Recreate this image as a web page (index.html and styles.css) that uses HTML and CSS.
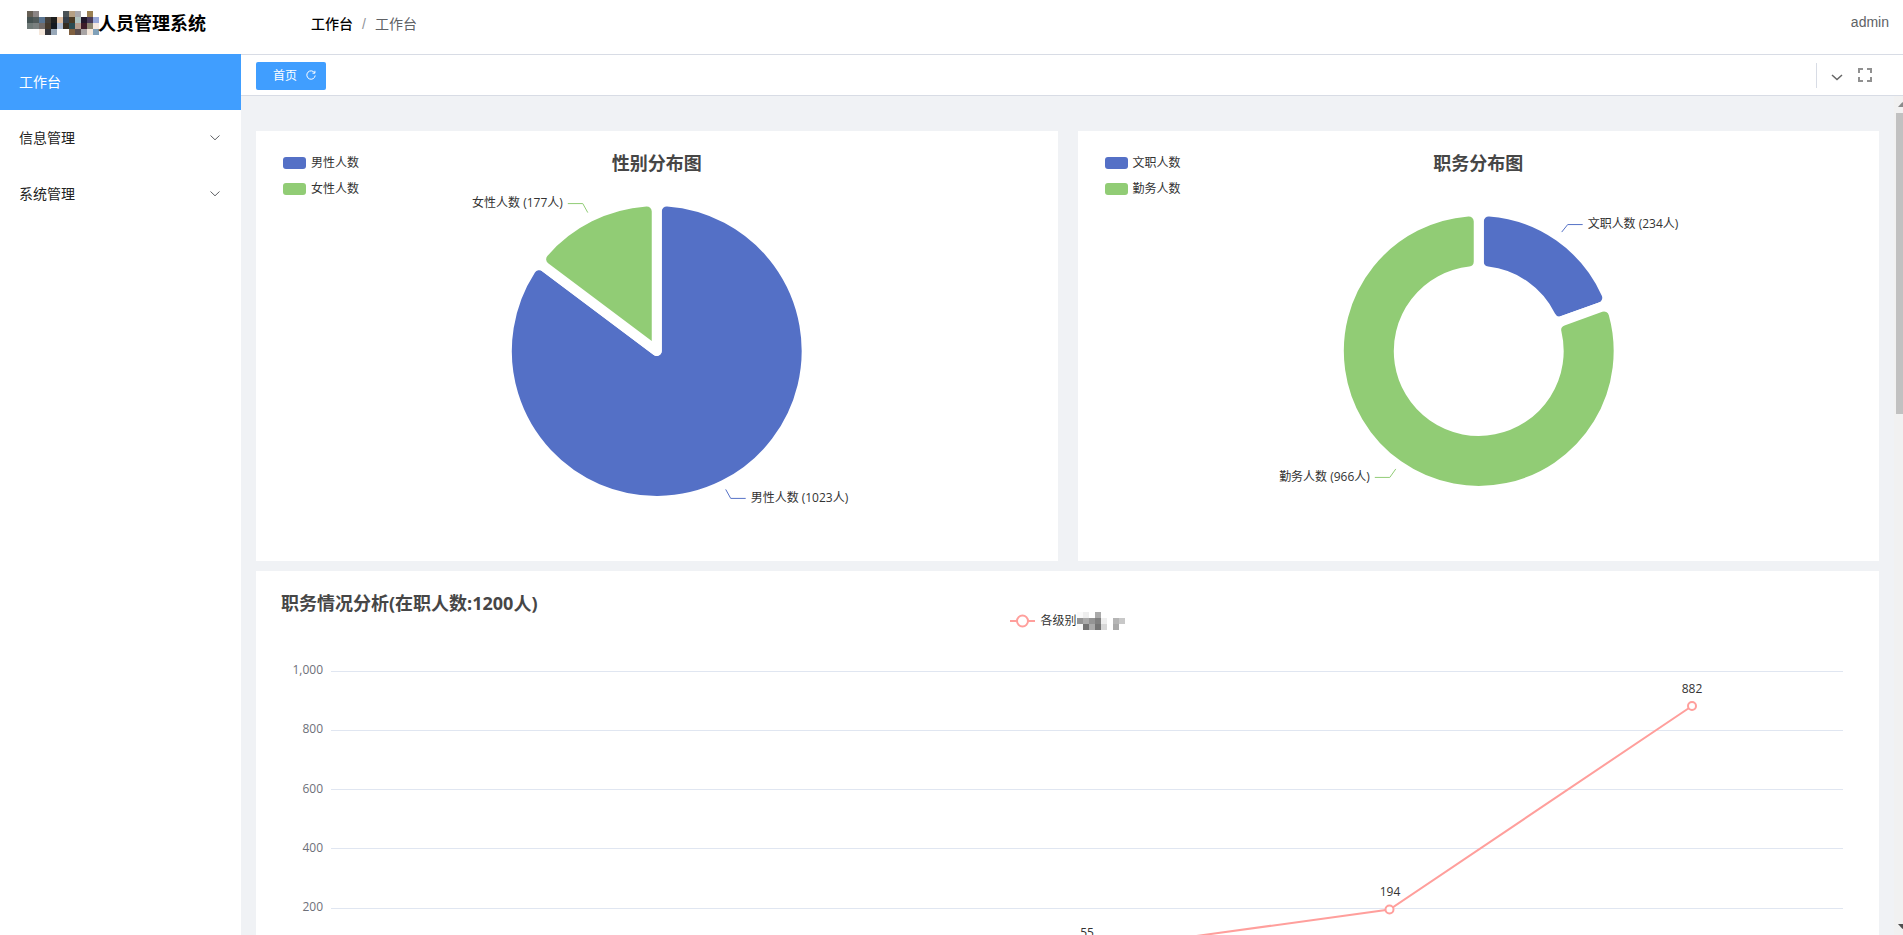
FILE: index.html
```html
<!DOCTYPE html>
<html lang="zh-CN">
<head>
<meta charset="utf-8">
<title>人员管理系统</title>
<link rel="stylesheet" href="styles.css">
</head>
<body>
<div class="app">
  <header class="header">
    <div class="brand">
      <svg class="brand-mosaic" width="72" height="24" viewBox="0 0 12 4" shape-rendering="crispEdges" aria-hidden="true">
        <path fill="#665f55" d="M0 0h1v1h-1z"/><path fill="#8b8585" d="M1 0h1v1h-1z"/><path fill="#4a5255" d="M6 0h1v1h-1z"/><path fill="#b5a084" d="M7 0h1v1h-1z"/><path fill="#a8a8ac" d="M8 0h1v1h-1z"/><path fill="#9a8052" d="M10 0h1v1h-1z"/>
        <path fill="#455252" d="M0 1h1v1h-1z"/><path fill="#505a5a" d="M1 1h1v1h-1z"/><path fill="#5a7490" d="M2 1h1v1h-1z"/><path fill="#433f3a" d="M3 1h1v1h-1z"/><path fill="#1e1e1e" d="M4 1h1v1h-1z"/><path fill="#dfc0a5" d="M5 1h1v1h-1z"/><path fill="#353f4a" d="M6 1h1v1h-1z"/><path fill="#4a3a25" d="M7 1h1v1h-1z"/><path fill="#b0c4c0" d="M8 1h1v1h-1z"/><path fill="#20182a" d="M9 1h1v1h-1z"/><path fill="#483a58" d="M10 1h1v1h-1z"/><path fill="#98a8d8" d="M11 1h1v1h-1z"/>
        <path fill="#6f7a78" d="M0 2h1v1h-1z"/><path fill="#7a8080" d="M1 2h1v1h-1z"/><path fill="#706a68" d="M2 2h1v1h-1z"/><path fill="#43382c" d="M3 2h1v1h-1z"/><path fill="#141820" d="M4 2h1v1h-1z"/><path fill="#b0bcd0" d="M5 2h1v1h-1z"/><path fill="#352c20" d="M6 2h1v1h-1z"/><path fill="#2c4c52" d="M7 2h1v1h-1z"/><path fill="#b8a090" d="M8 2h1v1h-1z"/><path fill="#3c1c28" d="M9 2h1v1h-1z"/><path fill="#8b8570" d="M10 2h1v1h-1z"/><path fill="#f5e8e0" d="M11 2h1v1h-1z"/>
        <path fill="#f5e8dc" d="M2 3h1v1h-1z"/><path fill="#34343a" d="M3 3h1v1h-1z"/><path fill="#98a8b8" d="M4 3h1v1h-1z"/><path fill="#806040" d="M7 3h1v1h-1z"/><path fill="#5a4e4e" d="M8 3h1v1h-1z"/><path fill="#a8a4a4" d="M9 3h1v1h-1z"/><path fill="#f5e8dc" d="M10 3h1v1h-1z"/><path fill="#80a0b8" d="M11 3h1v1h-1z"/>
      </svg>
      <h1 class="brand-name">人员管理系统</h1>
    </div>
    <nav class="breadcrumb" aria-label="面包屑">
      <a class="crumb crumb-root" href="#">工作台</a>
      <span class="crumb-sep">/</span>
      <span class="crumb">工作台</span>
    </nav>
    <a class="user" href="#">admin</a>
  </header>

  <div class="body">
    <nav class="sidebar" aria-label="主菜单">
      <a class="menu-item menu-item-active" href="#">工作台</a>
      <button class="menu-item" type="button"><span>信息管理</span>
        <svg width="12" height="12" viewBox="0 0 12 12" aria-hidden="true"><path class="stroke-icon" d="M1.500 4.500L6 8.800L10.500 4.500"/></svg>
      </button>
      <button class="menu-item" type="button"><span>系统管理</span>
        <svg width="12" height="12" viewBox="0 0 12 12" aria-hidden="true"><path class="stroke-icon" d="M1.500 4.500L6 8.800L10.500 4.500"/></svg>
      </button>
    </nav>

    <div class="content">
      <div class="tabs">
        <button class="tab" type="button">首页
          <svg width="12" height="12" viewBox="0 0 12 12" aria-hidden="true"><path class="tab-icon" d="M9.700 4A4.200 4.200 0 1 0 10.200 6.500M9.900 1.800V4.200H7.500"/></svg>
        </button>
        <div class="tab-tools">
          <button class="tool" type="button" aria-label="更多">
            <svg width="12" height="14" viewBox="0 0 12 14"><path class="tool-chevron" d="M1 7L6 11.500L11 7"/></svg>
          </button>
          <button class="tool" type="button" aria-label="全屏">
            <svg width="14" height="14" viewBox="0 0 14 14"><path class="tool-full" d="M1 5V1H5M9 1H13V5M13 9V13H9M5 13H1V9"/></svg>
          </button>
        </div>
      </div>

      <div class="viewport">
        <main class="main">
          <div class="row">
            <section class="card">
              <ul class="legend">
                <li><i class="swatch swatch-blue"></i>男性人数</li>
                <li><i class="swatch swatch-green"></i>女性人数</li>
              </ul>
              <h2 class="card-title card-title-center">性别分布图</h2>
              <svg class="plot" viewBox="0 0 802 430" role="img" aria-label="性别分布图">
                <g transform="translate(401 220)" class="slices">
                  <path class="blue" d="M0 0L0 -139.640A10 10 0 0 1 10.710 -149.620A150 150 0 1 1 -126.080 -81.270A10 10 0 0 1 -111.670 -83.840Z"/>
                  <path class="green" d="M0 0L-111.670 -83.840A10 10 0 0 1 -113.220 -98.400A150 150 0 0 1 -10.710 -149.620A10 10 0 0 1 0 -139.640Z"/>
                </g>
                <path class="lead lead-green" d="M332 81.500L327 72.500H312"/>
                <text class="label label-end" x="307" y="76">女性人数 (177人)</text>
                <path class="lead lead-blue" d="M470 358.500L475 367.500H490"/>
                <text class="label" x="495" y="371">男性人数 (1023人)</text>
              </svg>
            </section>
            <section class="card">
              <ul class="legend">
                <li><i class="swatch swatch-blue"></i>文职人数</li>
                <li><i class="swatch swatch-green"></i>勤务人数</li>
              </ul>
              <h2 class="card-title card-title-center">职务分布图</h2>
              <svg class="plot" viewBox="0 0 802 430" role="img" aria-label="职务分布图">
                <g transform="translate(401 220)" class="slices">
                  <path class="blue" d="M0 -89.440L0 -129.610A10 10 0 0 1 10.770 -139.590A140 140 0 0 1 127.690 -57.410A10 10 0 0 1 121.950 -43.900L84.150 -30.300A10 10 0 0 1 71.790 -35.290A80 80 0 0 0 8.890 -79.500A10 10 0 0 1 0 -89.440Z"/>
                  <path class="green" d="M84.150 -30.300L121.950 -43.900A10 10 0 0 1 134.980 -37.150A140 140 0 1 1 -10.770 -139.590A10 10 0 0 1 0 -129.610L0 -89.440A10 10 0 0 1 -8.890 -79.500A80 80 0 1 0 77.810 -18.570A10 10 0 0 1 84.150 -30.300Z"/>
                </g>
                <path class="lead lead-blue" d="M484 101L490 93.500H505"/>
                <text class="label" x="510" y="97">文职人数 (234人)</text>
                <path class="lead lead-green" d="M318 338L312 346.500H297"/>
                <text class="label label-end" x="292" y="350">勤务人数 (966人)</text>
              </svg>
            </section>
          </div>

          <section class="card">
            <h2 class="card-title">职务情况分析(在职人数:1200人)</h2>
            <div class="line-legend">
              <svg width="25" height="14" viewBox="0 0 25 14" aria-hidden="true"><path class="series" d="M0 7H25"/><circle class="dot" cx="12.500" cy="7" r="5.500"/></svg>
              <span>各级别</span>
              <svg class="legend-mosaic" width="48" height="18" viewBox="0 0 8 3" shape-rendering="crispEdges" aria-hidden="true">
                <path fill="#fafafa" d="M0 0h1v1h-1zM0 2h1v1h-1z"/><path fill="#eee" d="M1 0h1v1h-1zM4 1h1v1h-1z"/><path fill="#aaa" d="M3 0h1v1h-1zM1 1h1v1h-1zM2 2h1v1h-1zM6 2h1v1h-1z"/><path fill="#949494" d="M0 1h1v1h-1zM2 1h1v1h-1z"/><path fill="#808080" d="M3 1h1v1h-1z"/><path fill="#b5b5b5" d="M6 1h1v1h-1z"/><path fill="#c8c8c8" d="M7 1h1v1h-1z"/><path fill="#747474" d="M1 2h1v1h-1zM3 2h1v1h-1z"/><path fill="#d8d8d8" d="M4 2h1v1h-1z"/>
              </svg>
            </div>
            <svg class="plot" viewBox="0 0 1623 430" role="img" aria-label="职务情况分析">
              <path class="grid" d="M75 100.500H1587M75 159.500H1587M75 218.500H1587M75 277.500H1587M75 337.500H1587M75 396.500H1587"/>
              <g class="axis">
                <text x="67" y="103">1,000</text>
                <text x="67" y="162">800</text>
                <text x="67" y="222">600</text>
                <text x="67" y="281">400</text>
                <text x="67" y="340">200</text>
              </g>
              <path class="series" d="M831 380L1133.500 338.500L1436 135"/>
              <circle class="dot" cx="831" cy="380" r="4"/>
              <circle class="dot" cx="1133.500" cy="338.500" r="4"/>
              <circle class="dot" cx="1436" cy="135" r="4"/>
              <g class="values">
                <text x="831" y="366">55</text>
                <text x="1134" y="325">194</text>
                <text x="1436" y="122">882</text>
              </g>
            </svg>
          </section>
        </main>
        <div class="scrollbar" aria-hidden="true">
          <svg width="17" height="17" viewBox="0 0 17 17"><path fill="#8b8b8b" d="M4 11L8.500 6L13 11Z"/></svg>
          <div class="thumb"></div>
          <svg width="17" height="17" viewBox="0 0 17 17"><path fill="#505050" d="M4 6L8.500 11L13 6Z"/></svg>
        </div>
      </div>
    </div>
  </div>
</div>
</body>
</html>
```

FILE: styles.css
```css
* {
  box-sizing: border-box;
}

body {
  margin: 0;
  font-family: "Liberation Sans", "Noto Sans CJK SC", sans-serif;
  font-size: 14px;
  color: #303133;
  background: #fff;
}

button {
  margin: 0;
  border: 0;
  background: none;
  font: inherit;
  color: inherit;
  cursor: pointer;
}

a {
  color: inherit;
  text-decoration: none;
}

svg {
  display: block;
  flex: none;
}

.app {
  display: flex;
  flex-direction: column;
  height: 100vh;
  overflow: hidden;
}

/* Header */
.header {
  display: flex;
  align-items: center;
  flex: none;
  height: 54px;
  padding: 0 14px 8px 27px;
}

.brand {
  display: flex;
  align-items: center;
  width: 284px;
}

.brand-name {
  margin: 2px 0 0 -1px;
  font-size: 18px;
  line-height: 24px;
  color: #000;
}

.breadcrumb {
  display: flex;
  flex: 1;
  gap: 9px;
  padding-top: 2px;
  line-height: 20px;
}

.crumb {
  color: #606266;
}

.crumb-root {
  color: #000;
  font-weight: 500;
}

.crumb-sep {
  color: #909399;
}

.user {
  padding-bottom: 2px;
  color: #606266;
}

/* Sidebar */
.body {
  display: flex;
  flex: 1;
  min-height: 0;
}

.sidebar {
  flex: none;
  width: 241px;
}

.menu-item {
  display: flex;
  align-items: center;
  justify-content: space-between;
  width: 100%;
  height: 56px;
  padding: 0 20px 2px 19px;
  color: #222;
}

.menu-item-active {
  background: #409eff;
  color: #fff;
}

.stroke-icon {
  fill: none;
  stroke: #606266;
}

/* Tab bar */
.content {
  display: flex;
  flex: 1;
  flex-direction: column;
  min-width: 0;
}

.tabs {
  display: flex;
  align-items: center;
  justify-content: space-between;
  flex: none;
  height: 42px;
  padding: 1px 31px 0 15px;
  border-top: 1px solid #d8dce5;
  border-bottom: 1px solid #d8dce5;
}

.tab {
  display: flex;
  align-items: center;
  gap: 8px;
  height: 28px;
  padding: 0 9px 2px 17px;
  border-radius: 2px;
  background: #409eff;
  color: #fff;
  font-size: 12px;
}

.tab-icon {
  fill: none;
  stroke: #fff;
}

.tab-tools {
  display: flex;
  align-items: center;
  gap: 15px;
  height: 25px;
  padding-left: 14px;
  border-left: 1px solid #d8dce5;
}

.tool {
  padding: 0 0 2px;
}

.tool-chevron {
  fill: none;
  stroke: #666;
  stroke-width: 1.5;
}

.tool-full {
  fill: none;
  stroke: #909090;
  stroke-width: 2;
}

/* Scrolling area */
.viewport {
  display: flex;
  flex: 1;
  min-height: 0;
  overflow: hidden;
  background: #f0f2f5;
}

.main {
  display: flex;
  flex: 1;
  flex-direction: column;
  gap: 10px;
  min-width: 0;
  padding: 35px 15px 0;
}

.scrollbar {
  display: flex;
  flex: none;
  flex-direction: column;
  width: 17px;
  margin-right: -8px;
  background: #f1f1f1;
}

.thumb {
  width: 13px;
  height: 301px;
  margin: 0 2px auto;
  background: #c1c1c1;
}

/* Chart cards */
.row {
  display: flex;
  gap: 20px;
}

.card {
  display: grid;
  flex: 1 0 auto;
  min-width: 0;
  background: #fff;
  font-family: "Open Sans", "Noto Sans CJK SC", sans-serif;
  font-size: 12px;
  color: #333;
}

.row .card {
  flex: 1 1 0;
}

.card > * {
  grid-area: 1 / 1;
}

.plot {
  width: 100%;
  height: 430px;
}

.card-title {
  align-self: start;
  justify-self: start;
  margin: 19px 25px;
  font-size: 18px;
  line-height: 26px;
  color: #464646;
}

.card-title-center {
  justify-self: center;
}

.legend {
  display: grid;
  align-self: start;
  justify-self: start;
  gap: 8px;
  margin: 23px 27px;
  padding: 0;
  list-style: none;
  line-height: 18px;
}

.legend li {
  display: flex;
  align-items: center;
  gap: 5px;
}

.swatch {
  width: 23px;
  height: 12px;
  border-radius: 3px;
}

.swatch-blue {
  background: #5470c6;
}

.swatch-green {
  background: #91cc75;
}

.line-legend {
  display: flex;
  align-items: center;
  align-self: start;
  justify-self: center;
  margin-top: 40px;
  line-height: 20px;
}

.line-legend span {
  margin-left: 5px;
}

.slices {
  stroke: #fff;
  stroke-width: 10;
  stroke-linejoin: round;
}

.blue {
  fill: #5470c6;
}

.green {
  fill: #91cc75;
}

.lead {
  fill: none;
}

.lead-blue {
  stroke: #5470c6;
}

.lead-green {
  stroke: #91cc75;
}

.label {
  fill: #333;
}

.label-end {
  text-anchor: end;
}

.grid {
  fill: none;
  stroke: #e0e6f1;
}

.axis {
  fill: #6e7079;
  text-anchor: end;
}

.values {
  fill: #333;
  text-anchor: middle;
}

.series {
  fill: none;
  stroke: #ff9f9c;
  stroke-width: 2;
}

.dot {
  fill: #fff;
  stroke: #ff9f9c;
  stroke-width: 2;
}
```
